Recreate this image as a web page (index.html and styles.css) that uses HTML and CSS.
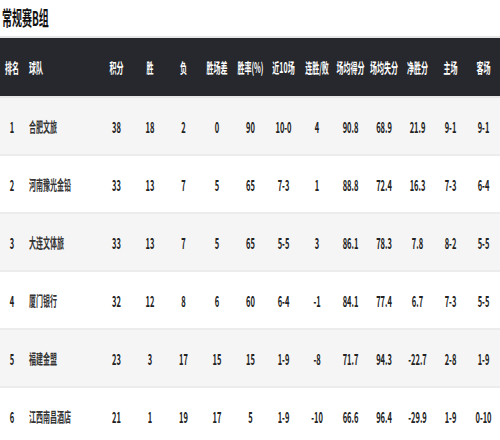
FILE: index.html
```html
<!DOCTYPE html>
<html lang="zh">
<head>
<meta charset="utf-8">
<title>常规赛B组</title>
<link rel="stylesheet" href="styles.css">
</head>
<body>
<div class="frame">
<div class="page">
  <h1 class="title">常规赛B组</h1>
  <table class="standings">
    <colgroup>
      <col class="c-rank"><col class="c-team">
      <col class="c-s"><col class="c-w"><col class="c-s"><col class="c-w">
      <col class="c-s"><col class="c-s"><col class="c-w"><col class="c-s">
      <col class="c-w"><col class="c-s"><col class="c-s"><col class="c-s">
    </colgroup>
    <thead>
      <tr>
        <th>排名</th><th class="team">球队</th><th>积分</th><th>胜</th><th>负</th><th>胜场差</th><th>胜率(%)</th><th>近10场</th><th>连胜/败</th><th>场均得分</th><th>场均失分</th><th>净胜分</th><th>主场</th><th>客场</th>
      </tr>
    </thead>
    <tbody>
      <tr><td>1</td><td class="team">合肥文旅</td><td>38</td><td>18</td><td>2</td><td>0</td><td>90</td><td>10-0</td><td>4</td><td>90.8</td><td>68.9</td><td>21.9</td><td>9-1</td><td>9-1</td></tr>
      <tr><td>2</td><td class="team">河南豫光金铅</td><td>33</td><td>13</td><td>7</td><td>5</td><td>65</td><td>7-3</td><td>1</td><td>88.8</td><td>72.4</td><td>16.3</td><td>7-3</td><td>6-4</td></tr>
      <tr><td>3</td><td class="team">大连文体旅</td><td>33</td><td>13</td><td>7</td><td>5</td><td>65</td><td>5-5</td><td>3</td><td>86.1</td><td>78.3</td><td>7.8</td><td>8-2</td><td>5-5</td></tr>
      <tr><td>4</td><td class="team">厦门银行</td><td>32</td><td>12</td><td>8</td><td>6</td><td>60</td><td>6-4</td><td>-1</td><td>84.1</td><td>77.4</td><td>6.7</td><td>7-3</td><td>5-5</td></tr>
      <tr><td>5</td><td class="team">福建金盟</td><td>23</td><td>3</td><td>17</td><td>15</td><td>15</td><td>1-9</td><td>-8</td><td>71.7</td><td>94.3</td><td>-22.7</td><td>2-8</td><td>1-9</td></tr>
      <tr><td>6</td><td class="team">江西南昌酒店</td><td>21</td><td>1</td><td>19</td><td>17</td><td>5</td><td>1-9</td><td>-10</td><td>66.6</td><td>96.4</td><td>-29.9</td><td>1-9</td><td>0-10</td></tr>
    </tbody>
  </table>
</div>
</div>
</body>
</html>
```

FILE: styles.css
```css
html, body {
  margin: 0;
  padding: 0;
  overflow: hidden;
  background: #fff;
}

.frame {
  width: 500px;
  height: 440px;
  overflow: hidden;
}

.page {
  width: 1000px;
  transform: scale(0.5, 1);
  transform-origin: 0 0;
  font-family: "Noto Sans CJK SC", "Noto Sans", sans-serif;
  color: #222;
}

.title {
  margin: 0;
  height: 36px;
  padding-left: 4px;
  font-size: 20px;
  line-height: 35px;
  font-weight: 700;
  color: #111;
  border-bottom: 2px solid #e6e6e6;
}

.standings {
  width: 1000px;
  table-layout: fixed;
  border-collapse: separate;
  border-spacing: 0;
}

.c-rank { width: 48px; }
.c-team { width: 152px; }
.c-s { width: 66px; }
.c-w { width: 68px; }

.standings th,
.standings td {
  padding: 0;
  text-align: center;
  white-space: nowrap;
}

.standings thead {
  background: #26282d;
}

.standings th {
  height: 58px;
  color: #fff;
  font-size: 14px;
  font-weight: 700;
  border-bottom: 2px solid #e8e8e8;
}

.standings td {
  height: 56px;
  font-size: 15px;
  font-weight: 700;
  color: #222;
  border-bottom: 2px solid #ececec;
}

.standings tbody tr:nth-child(odd) {
  background: #f5f5f5;
}

.standings tbody tr:nth-child(even) {
  background: #fff;
}

.standings .team {
  text-align: left;
  padding-left: 10px;
}

.standings td.team {
  font-size: 14px;
  font-weight: 700;
  color: #333;
}
```
